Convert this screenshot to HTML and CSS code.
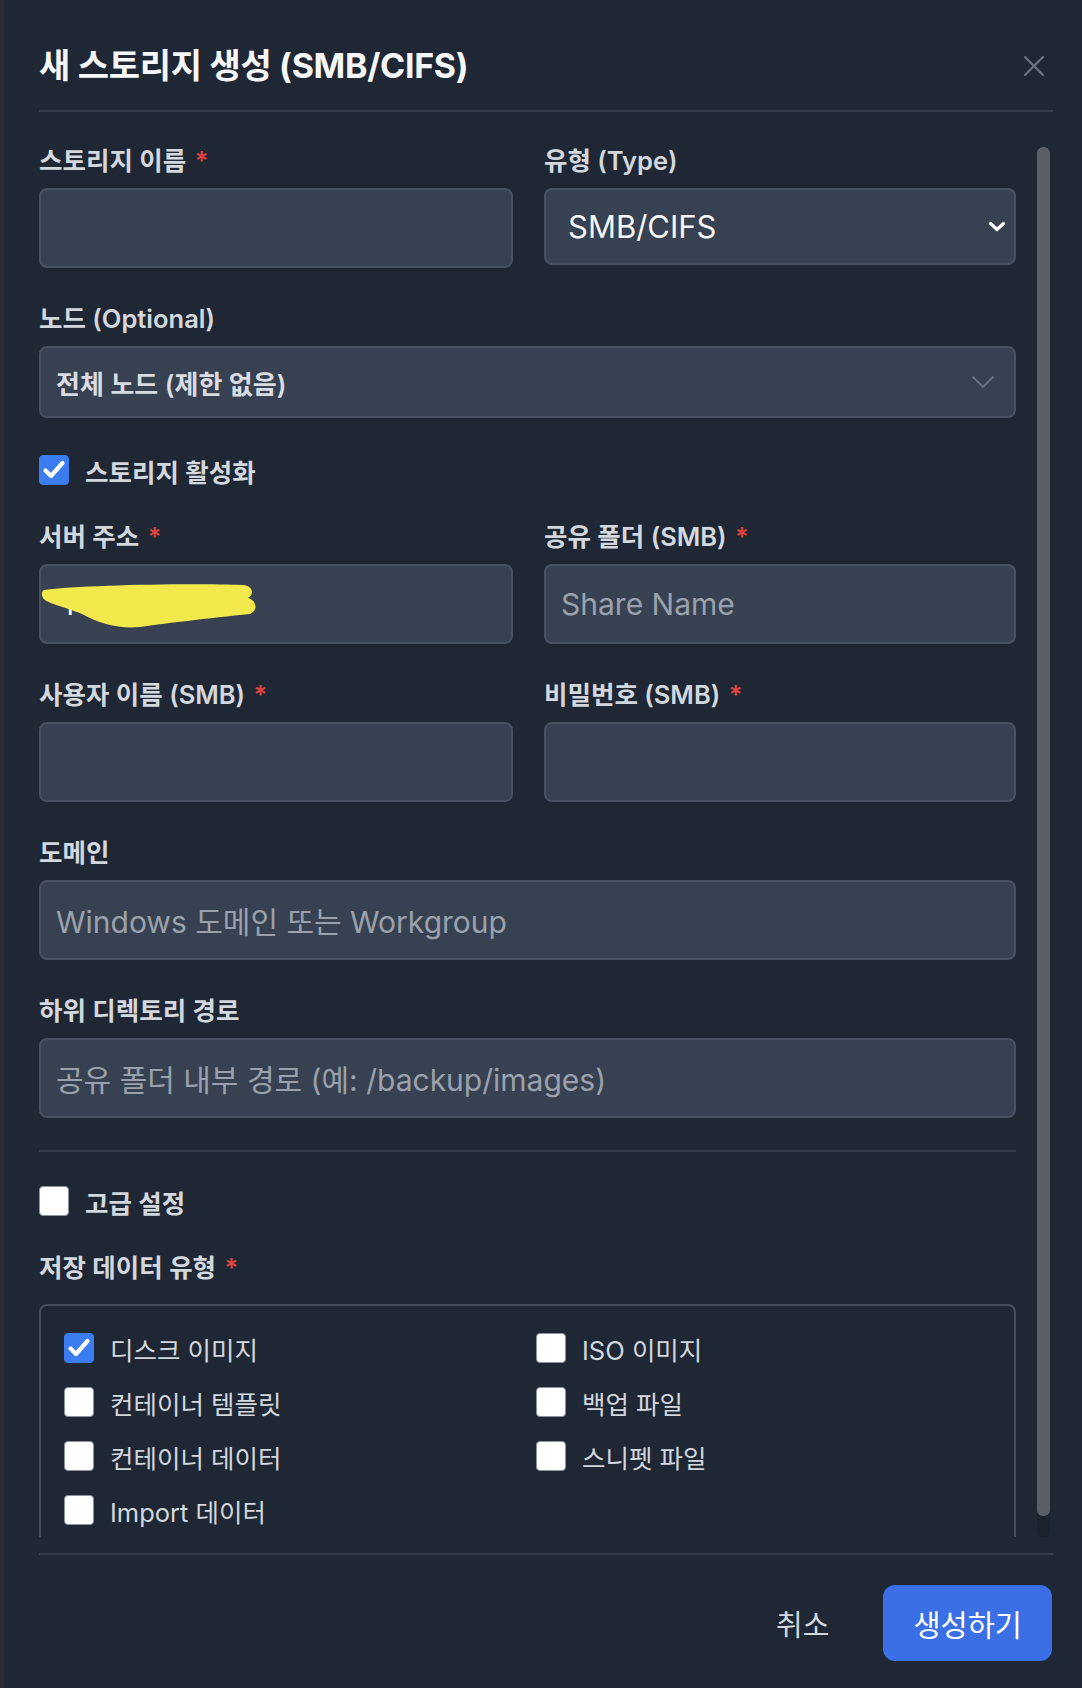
FILE: index.html
```html
<!DOCTYPE html>
<html lang="ko">
<head>
<meta charset="utf-8">
<title>새 스토리지 생성 (SMB/CIFS)</title>
<link rel="stylesheet" href="styles.css">
</head>
<body>
<div class="modal">
  <header class="modal-header">
    <h1 class="modal-title">새 스토리지 생성 (SMB/CIFS)</h1>
    <button class="close-btn" aria-label="닫기">
      <svg width="22" height="22" viewBox="0 0 22 22"><path d="M2 2 L20 20 M20 2 L2 20" stroke="#6b7280" stroke-width="2.2" stroke-linecap="round" fill="none"/></svg>
    </button>
  </header>

  <div class="scroll-area">
    <div class="form">
      <div class="row two">
        <div class="field">
          <label class="label">스토리지 이름 <span class="req">*</span></label>
          <div class="input"></div>
        </div>
        <div class="field">
          <label class="label">유형 (Type)</label>
          <div class="select native">
            <span class="select-value">SMB/CIFS</span>
            <svg class="chev-bold" width="18" height="11" viewBox="0 0 18 11"><path d="M2.5 2.5 L9 8.5 L15.5 2.5" stroke="#ffffff" stroke-width="3.2" stroke-linecap="round" stroke-linejoin="round" fill="none"/></svg>
          </div>
        </div>
      </div>

      <div class="field">
        <label class="label">노드 (Optional)</label>
        <div class="select node">
          <span class="node-value">전체 노드 (제한 없음)</span>
          <svg class="chev-thin" width="24" height="14" viewBox="0 0 24 14"><path d="M1.5 1.5 L12 12 L22.5 1.5" stroke="#6b7280" stroke-width="1.8" fill="none"/></svg>
        </div>
      </div>

      <div class="check-row">
        <span class="checkbox checked"><svg width="26" height="26" viewBox="0 0 26 26"><path d="M4.5 13.5 L10 19 L21.5 6" stroke="#fff" stroke-width="4.2" stroke-linecap="round" stroke-linejoin="round" fill="none"/></svg></span>
        <span class="check-label">스토리지 활성화</span>
      </div>

      <div class="row two">
        <div class="field">
          <label class="label">서버 주소 <span class="req">*</span></label>
          <div class="input has-scribble">
            <span class="value">1</span>
            <svg class="scribble" width="220" height="70" viewBox="0 0 220 70"><path d="M4 24 C 40 19, 150 17, 203 19 C 214 20, 214 29, 208 32 C 216 34, 219 44, 210 48 C 170 52, 120 58, 100 61 C 80 63, 60 58, 42 48 C 22 40, 6 37, 3 32 C 1 28, 2 25, 4 24 Z" fill="#f3e84c"/></svg>
          </div>
        </div>
        <div class="field">
          <label class="label">공유 폴더 (SMB) <span class="req">*</span></label>
          <div class="input"><span class="placeholder">Share Name</span></div>
        </div>
      </div>

      <div class="row two">
        <div class="field">
          <label class="label">사용자 이름 (SMB) <span class="req">*</span></label>
          <div class="input"></div>
        </div>
        <div class="field">
          <label class="label">비밀번호 (SMB) <span class="req">*</span></label>
          <div class="input"></div>
        </div>
      </div>

      <div class="field">
        <label class="label">도메인</label>
        <div class="input"><span class="placeholder">Windows 도메인 또는 Workgroup</span></div>
      </div>

      <div class="field">
        <label class="label">하위 디렉토리 경로</label>
        <div class="input"><span class="placeholder">공유 폴더 내부 경로 (예: /backup/images)</span></div>
      </div>

      <div class="divider"></div>

      <div class="check-row">
        <span class="checkbox"></span>
        <span class="check-label">고급 설정</span>
      </div>

      <div class="field">
        <label class="label label-tight">저장 데이터 유형 <span class="req">*</span></label>
        <div class="type-box">
          <div class="type-item">
            <span class="checkbox checked"><svg width="26" height="26" viewBox="0 0 26 26"><path d="M4.5 13.5 L10 19 L21.5 6" stroke="#fff" stroke-width="4.2" stroke-linecap="round" stroke-linejoin="round" fill="none"/></svg></span>
            <span class="type-label">디스크 이미지</span>
          </div>
          <div class="type-item">
            <span class="checkbox"></span>
            <span class="type-label">ISO 이미지</span>
          </div>
          <div class="type-item">
            <span class="checkbox"></span>
            <span class="type-label">컨테이너 템플릿</span>
          </div>
          <div class="type-item">
            <span class="checkbox"></span>
            <span class="type-label">백업 파일</span>
          </div>
          <div class="type-item">
            <span class="checkbox"></span>
            <span class="type-label">컨테이너 데이터</span>
          </div>
          <div class="type-item">
            <span class="checkbox"></span>
            <span class="type-label">스니펫 파일</span>
          </div>
          <div class="type-item">
            <span class="checkbox"></span>
            <span class="type-label">Import 데이터</span>
          </div>
        </div>
      </div>
    </div>
    <div class="scrollbar"><div class="thumb"></div></div>
  </div>

  <footer class="modal-footer">
    <button class="btn-cancel">취소</button>
    <button class="btn-primary">생성하기</button>
  </footer>
</div>
</body>
</html>
```

FILE: styles.css
```css
* {
  box-sizing: border-box;
}

html, body {
  margin: 0;
  padding: 0;
  background: #1f2735;
}

body {
  font-family: Inter, "Noto Sans CJK KR", "Noto Sans", sans-serif;
  color: #d1d5db;
}

.modal {
  width: 1082px;
  height: 1688px;
  border-left: 4px solid #292c31;
  padding: 46px 29px 0 35px;
  background: #1f2735;
  display: flex;
  flex-direction: column;
}

.modal-header {
  display: flex;
  align-items: center;
  justify-content: space-between;
  padding-bottom: 24px;
  border-bottom: 2px solid #353d4b;
}

.modal-title {
  margin: 0;
  font-size: 34px;
  line-height: 40px;
  font-weight: 700;
  color: #f5f6f8;
  letter-spacing: -0.3px;
}

.close-btn {
  background: none;
  border: none;
  padding: 0;
  margin-right: 8px;
  width: 22px;
  height: 22px;
  display: flex;
}

.scroll-area {
  margin-top: 20px;
  height: 1405px;
  overflow: hidden;
  display: flex;
  align-items: flex-start;
}

.form {
  width: 977px;
  flex: none;
  padding-top: 14px;
  display: flex;
  flex-direction: column;
  gap: 36px;
}

.scrollbar {
  margin-left: 21px;
  margin-top: 15px;
  width: 13px;
  height: 1390px;
  background: #1c222c;
  border-radius: 6px;
  flex: none;
}

.thumb {
  width: 13px;
  height: 1369px;
  background: #5a5f67;
  border-radius: 6px;
}

.row.two {
  display: grid;
  grid-template-columns: 474px 472px;
  column-gap: 31px;
}

.field {
  display: flex;
  flex-direction: column;
}

.label {
  font-size: 25.5px;
  line-height: 30px;
  font-weight: 600;
  color: #d3d7de;
  margin-bottom: 12px;
  white-space: nowrap;
}

.label-tight {
  margin-bottom: 21px;
}

.req {
  color: #e0443e;
  margin-left: 2px;
}

.input {
  position: relative;
  height: 80px;
  background: #384151;
  border: 2px solid #485161;
  border-radius: 8px;
  display: flex;
  align-items: center;
  padding: 0 15px;
  overflow: hidden;
}

.placeholder {
  font-size: 30px;
  color: #9aa1ad;
  white-space: nowrap;
}

.value {
  font-size: 30px;
  color: #f3f4f6;
  padding-left: 6px;
}

.scribble {
  position: absolute;
  left: -1px;
  top: 0;
}

.select {
  background: #384151;
  border: 2px solid #485161;
  border-radius: 8px;
  display: flex;
  align-items: center;
  justify-content: space-between;
}

.select.native {
  height: 77px;
  padding: 0 6px 0 22px;
}

.select-value {
  font-size: 31px;
  color: #f5f6f8;
}

.select.node {
  height: 72px;
  padding: 0 19px 0 15px;
}

.node-value {
  font-size: 26px;
  font-weight: 600;
  color: #d9dce2;
}

.chev-bold {
  margin-right: 2px;
}

.check-row {
  display: flex;
  align-items: center;
  height: 32px;
  gap: 16px;
}

.checkbox {
  width: 30px;
  height: 30px;
  border-radius: 4px;
  background: #ffffff;
  border: 1.5px solid #8d939c;
  display: flex;
  align-items: center;
  justify-content: center;
  flex: none;
}

.checkbox.checked {
  background: #3b7cf0;
  border-color: #3b7cf0;
}

.check-label {
  font-size: 25.5px;
  font-weight: 600;
  color: #d3d7de;
}

.divider {
  border-top: 2px solid #353d4b;
  margin: -4px 0 -3px;
}

.type-box {
  border: 2px solid #464e5c;
  border-radius: 8px;
  padding: 27px 25px 60px 23px;
  display: grid;
  grid-template-columns: 451px 451px;
  column-gap: 21px;
  row-gap: 24px;
}

.type-item {
  display: flex;
  align-items: center;
  height: 30px;
  gap: 16px;
}

.type-label {
  font-size: 25.5px;
  color: #d3d7de;
  white-space: nowrap;
}

.modal-footer {
  margin-top: 16px;
  border-top: 2px solid #353d4b;
  padding-top: 30px;
  display: flex;
  justify-content: flex-end;
  gap: 30px;
  padding-right: 1px;
}

.btn-cancel {
  background: none;
  border: none;
  font-family: inherit;
  font-size: 29px;
  color: #d3d7de;
  height: 76px;
  padding: 0 24px;
}

.btn-primary {
  background: #3b6fe6;
  border: none;
  border-radius: 12px;
  font-family: inherit;
  font-size: 29.5px;
  color: #ffffff;
  height: 76px;
  padding: 0 30px;
}
```
